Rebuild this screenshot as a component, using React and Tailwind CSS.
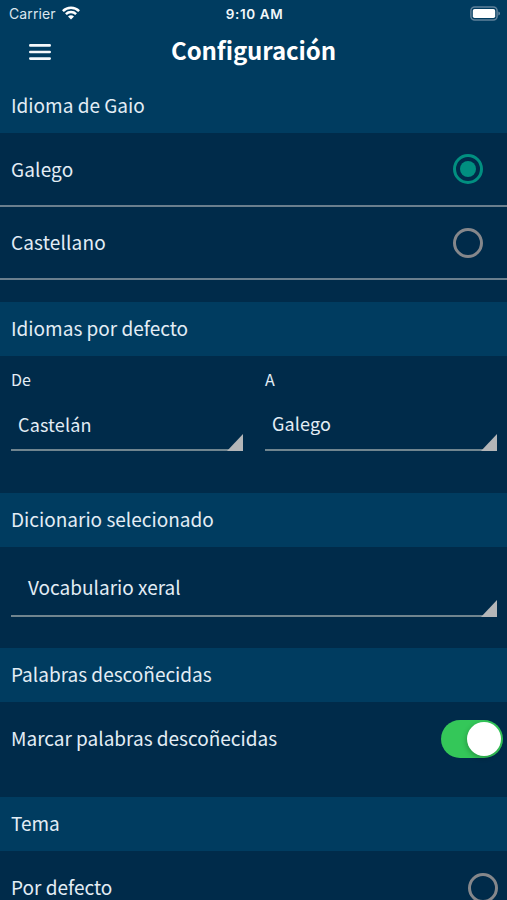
import { useState } from "react";
import clsx from "clsx";

const LANGUAGES = [
  { id: "gl", label: "Galego" },
  { id: "es", label: "Castellano" },
];

function StatusBar() {
  return (
    <div className="grid grid-cols-3 items-center h-7 pl-[9px] pr-[7px] font-['Inter','Liberation_Sans',sans-serif]">
      <div className="flex items-center gap-[6px]">
        <span className="text-[14px] leading-none tracking-[0.12px] text-[#dbe6ee]">Carrier</span>
        <svg className="w-[18px] h-[14px] -mt-0.5" viewBox="0 0 18 14" fill="none" stroke="#fff" strokeWidth="2.5">
          <path d="M0.9 5.1 A11.6 11.6 0 0 1 17.1 5.1" />
          <path d="M3.9 8.2 A7.3 7.3 0 0 1 14.1 8.2" />
          <path d="M9 13.6 L6 10.6 A4.3 4.3 0 0 1 12 10.6 Z" fill="#fff" stroke="none" />
        </svg>
      </div>
      <span className="pt-px text-center text-[13.5px] leading-none font-semibold tracking-[0.6px] text-[#f2f7fa] whitespace-nowrap">9:10 AM</span>
      <svg className="justify-self-end w-[30px] h-[15px] -mt-0.5" viewBox="0 0 30 15">
        <rect x="0.9" y="1" width="26.2" height="13" rx="3.8" fill="none" stroke="#5f819a" strokeWidth="1.5" />
        <rect x="2.8" y="3" width="22.4" height="9" rx="1.8" fill="#fff" />
        <path d="M28.4 5.4 Q30 6 30 7.5 Q30 9 28.4 9.6 Z" fill="#6c8ca3" />
      </svg>
    </div>
  );
}

function NavBar() {
  return (
    <header className="grid grid-cols-[80px_1fr_80px] items-center h-[51px] pb-1">
      <button className="justify-self-center" aria-label="Menú">
        <svg className="w-[22px] h-4" viewBox="0 0 22 16" stroke="#f4f8fb" strokeWidth="2.6" strokeLinecap="round">
          <path d="M1.3 1.4h19.4M1.3 8h19.4M1.3 14.6h19.4" />
        </svg>
      </button>
      <h1 className="-mt-[3px] text-center text-[24px] leading-8 font-bold tracking-[-0.1px] text-white">Configuración</h1>
    </header>
  );
}

function SectionTitle({ children }) {
  return (
    <h2 className="flex items-center h-[54px] px-[11px] pb-px bg-[#003c60]">
      {children}
    </h2>
  );
}

function Radio({ checked }) {
  return (
    <span
      className={clsx(
        "flex items-center justify-center size-[30px] rounded-full border-3",
        checked ? "border-[#018f80]" : "border-[#85878b]"
      )}
    >
      {checked && <span className="size-4 rounded-full bg-[#018f80]"></span>}
    </span>
  );
}

function Dropdown({ value, className }) {
  return (
    <button className={clsx("flex items-end justify-between w-full border-b-2 border-[#70858f] text-left", className)}>
      <span>{value}</span>
      <svg className="w-4 h-[17px] -mb-0.5" viewBox="0 0 16 17">
        <path d="M16 0V17H0Z" fill="#b4b6b8" />
      </svg>
    </button>
  );
}

function Switch({ on, onChange }) {
  return (
    <button
      role="switch"
      aria-checked={on}
      onClick={onChange}
      className={clsx(
        "flex items-center w-[62px] h-[38px] px-0.5 rounded-full",
        on ? "justify-end bg-[#34c759]" : "justify-start bg-[#39393d]"
      )}
    >
      <span className="size-[34px] rounded-full bg-white shadow-[-1px_2px_5px_rgba(0,0,0,0.22)]"></span>
    </button>
  );
}

export default function App() {
  const [language, setLanguage] = useState("gl");
  const [markUnknown, setMarkUnknown] = useState(true);

  return (
    <div className="w-full h-[900px] overflow-hidden bg-[#002b4a] text-[#e3edf5] text-[19px] font-['Noto_Sans_CJK_SC','Noto_Sans',sans-serif]">
      <div className="bg-[#003c60]">
        <StatusBar />
        <NavBar />
        <SectionTitle>Idioma de Gaio</SectionTitle>
      </div>

      <ul className="mb-[22px]">
        {LANGUAGES.map((item) => (
          <li key={item.id} className="border-b-2 border-[#6a7f8e]">
            <button
              onClick={() => setLanguage(item.id)}
              className="flex items-center justify-between w-full h-[71.5px] pl-[11px] pr-6 pt-px tracking-[0.15px]"
            >
              <span className="pb-px">{item.label}</span>
              <Radio checked={language === item.id} />
            </button>
          </li>
        ))}
      </ul>

      <SectionTitle>Idiomas por defecto</SectionTitle>
      <div className="grid grid-cols-2 gap-[22px] h-[137px] pl-[11px] pr-[10px] pt-[9px]">
        <div>
          <p className="text-[16px] leading-7">De</p>
          <Dropdown value="Castelán" className="h-[58px] pl-[7px] text-[18px] leading-[50px] tracking-[0.15px]" />
        </div>
        <div>
          <p className="text-[16px] leading-7">A</p>
          <Dropdown value="Galego" className="h-[58px] pl-[7px] text-[18px] leading-[52px] tracking-[0.15px]" />
        </div>
      </div>

      <SectionTitle>Dicionario selecionado</SectionTitle>
      <div className="h-[101px] pl-[11px] pr-[10px]">
        <Dropdown value="Vocabulario xeral" className="h-[70px] pl-[17px] leading-14" />
      </div>

      <SectionTitle>Palabras descoñecidas</SectionTitle>
      <div className="flex items-start justify-between h-[95px] pl-[11px] pr-1 pt-[18px]">
        <span className="leading-9">Marcar palabras descoñecidas</span>
        <Switch on={markUnknown} onChange={() => setMarkUnknown(!markUnknown)} />
      </div>

      <SectionTitle>Tema</SectionTitle>
      <div className="flex items-center justify-between h-[73px] pl-[11px] pr-[9px]">
        <span className="pb-px">Por defecto</span>
        <Radio checked={false} />
      </div>
    </div>
  );
}
